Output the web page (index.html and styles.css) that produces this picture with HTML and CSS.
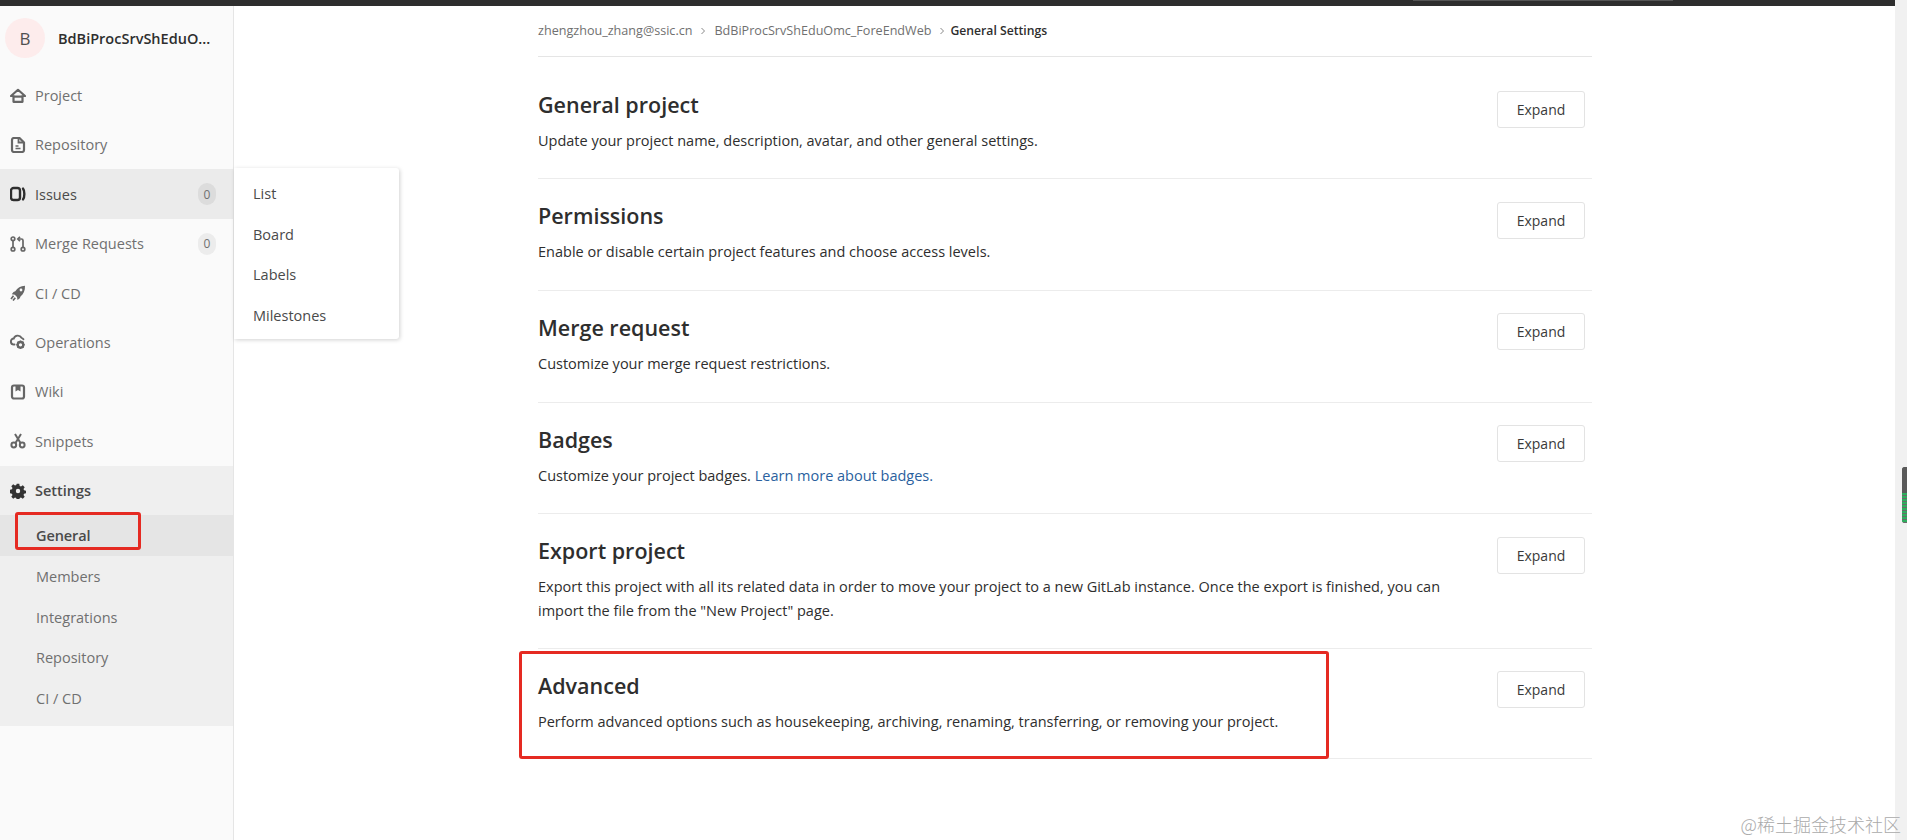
FILE: index.html
```html
<!DOCTYPE html>
<html lang="en">
<head>
<meta charset="utf-8">
<title>General Settings</title>
<link rel="stylesheet" href="styles.css">
</head>
<body>
<div class="page">
  <div class="page-main">
    <header class="topbar"><div class="topbar-field"></div></header>
    <div class="layout">
      <aside class="sidebar">
        <div class="project">
          <div class="avatar">B</div>
          <div class="project-name">BdBiProcSrvShEduO...</div>
        </div>
        <nav class="nav">
          <div class="nav-item">
            <svg class="icon" viewBox="0 0 16 16"><path d="M8 1.800 1 8h2.500v5.800h9V8H15z" fill="none" stroke="currentColor" stroke-width="2.200" stroke-linejoin="round"/><rect x="4" y="7.500" width="8" height="2.200" fill="currentColor"/></svg>
            <span>Project</span>
          </div>
          <div class="nav-item">
            <svg class="icon" viewBox="0 0 16 16"><path d="M4 1h5.500L14 5.500V13a2 2 0 0 1-2 2H4a2 2 0 0 1-2-2V3a2 2 0 0 1 2-2z" fill="none" stroke="currentColor" stroke-width="2.200" stroke-linejoin="round"/><path d="M8.500 2v3.500H13" fill="none" stroke="currentColor" stroke-width="1.800"/><path d="M5.500 9h3M5.500 11.500h5" stroke="currentColor" stroke-width="1.500"/></svg>
            <span>Repository</span>
          </div>
          <div class="nav-item nav-item-hover">
            <svg class="icon" viewBox="0 0 16 16"><rect x="1" y="2" width="9" height="12" rx="2.600" fill="none" stroke="currentColor" stroke-width="2.400"/><path d="M13 2.600c1.800 2 1.800 8.800 0 10.800" fill="none" stroke="currentColor" stroke-width="2.400" stroke-linecap="round"/></svg>
            <span>Issues</span>
            <span class="badge badge-dark">0</span>
          </div>
          <div class="nav-item">
            <svg class="icon" viewBox="0 0 16 16"><g fill="none" stroke="currentColor" stroke-width="1.700"><circle cx="3" cy="2.800" r="1.800"/><circle cx="3" cy="13.200" r="1.800"/><circle cx="13" cy="13.200" r="1.800"/><path d="M3 4.800v6.500M13 11.300V4.500A1.500 1.500 0 0 0 11.500 3H8"/><path d="M10 .8 7.800 3 10 5.200"/></g></svg>
            <span>Merge Requests</span>
            <span class="badge">0</span>
          </div>
          <div class="nav-item">
            <svg class="icon" viewBox="0 0 16 16"><path d="M15 .8C10.500 1 7.500 2.800 5.300 6.300L3.500 7 1.800 9.300 4.800 9.800 7 12 7.500 15l2.300-1.800.7-1.800C13.500 9 15.200 5.800 15 .8z" fill="currentColor"/><circle cx="11" cy="5" r="1.400" fill="#fafafa"/><path d="M3.500 10.800 1 14M5.300 12.800 3 15.500" stroke="currentColor" stroke-width="1.700"/></svg>
            <span>CI / CD</span>
          </div>
          <div class="nav-item">
            <svg class="icon" viewBox="0 0 16 16"><path d="M4.500 10.500H4A3 3 0 0 1 3.800 4.500 4.200 4.200 0 0 1 11.500 3.800c.8.200 1.500.7 1.900 1.400" fill="none" stroke="currentColor" stroke-width="1.900" stroke-linecap="round"/><circle cx="10.500" cy="10.800" r="2.800" fill="none" stroke="currentColor" stroke-width="2.300"/><path d="M10.500 6.500v1.500M10.500 13.500v1.500M6.300 10.800h1.500M13.200 10.800h1.500M7.500 7.800l1 1M12.500 12.800l1 1M13.500 7.800l-1 1M8.500 12.800l-1 1" stroke="currentColor" stroke-width="1.500"/></svg>
            <span>Operations</span>
          </div>
          <div class="nav-item">
            <svg class="icon" viewBox="0 0 16 16"><rect x="2" y="1.500" width="12" height="13" rx="2" fill="none" stroke="currentColor" stroke-width="2.200"/><path d="M5.500 1.500h5v6L8 6 5.500 7.500z" fill="currentColor"/></svg>
            <span>Wiki</span>
          </div>
          <div class="nav-item">
            <svg class="icon" viewBox="0 0 16 16"><g fill="none" stroke="currentColor" stroke-width="2"><circle cx="3.800" cy="12" r="2.400"/><circle cx="12.200" cy="12" r="2.400"/><path d="M5.500 10 11 1M10.500 10 5 1"/></g></svg>
            <span>Snippets</span>
          </div>
        </nav>
        <section class="nav-group">
          <div class="nav-item nav-item-strong">
            <svg class="icon" viewBox="0 0 16 16"><path d="M6.700.8h2.600l.4 2.100 1.300.6 1.800-1.200 1.900 1.900-1.200 1.800.6 1.300 2.100.4v2.600l-2.100.4-.6 1.300 1.200 1.800-1.900 1.900-1.800-1.200-1.300.6-.4 2.100H6.700l-.4-2.100-1.300-.6-1.800 1.200-1.900-1.900 1.200-1.800-.6-1.300-2.100-.4V6.700l2.100-.4.600-1.300-1.200-1.800 1.900-1.900 1.800 1.200 1.300-.6zM8 5.800a2.200 2.200 0 1 0 0 4.400 2.200 2.200 0 0 0 0-4.400z" fill="currentColor" fill-rule="evenodd"/></svg>
            <span>Settings</span>
          </div>
          <div class="sub-item sub-item-active">General<div class="mark mark-general"></div></div>
          <div class="sub-item">Members</div>
          <div class="sub-item">Integrations</div>
          <div class="sub-item">Repository</div>
          <div class="sub-item">CI / CD</div>
        </section>
      </aside>
      <div class="flyout">
        <div class="flyout-item">List</div>
        <div class="flyout-item">Board</div>
        <div class="flyout-item">Labels</div>
        <div class="flyout-item">Milestones</div>
      </div>
      <main class="content">
        <div class="breadcrumbs">
          <span>zhengzhou_zhang@ssic.cn</span>
          <svg class="chevron" viewBox="0 0 8 8"><path d="M2.500 1 5.500 4 2.500 7" fill="none" stroke="currentColor"/></svg>
          <span>BdBiProcSrvShEduOmc_ForeEndWeb</span>
          <svg class="chevron chevron-tight" viewBox="0 0 8 8"><path d="M2.500 1 5.500 4 2.500 7" fill="none" stroke="currentColor"/></svg>
          <strong class="crumb-current">General Settings</strong>
        </div>
        <section class="panel panel-first">
          <div class="panel-text">
            <h2 class="panel-title">General project</h2>
            <p class="panel-desc">Update your project name, description, avatar, and other general settings.</p>
          </div>
          <button class="btn">Expand</button>
        </section>
        <section class="panel">
          <div class="panel-text">
            <h2 class="panel-title">Permissions</h2>
            <p class="panel-desc">Enable or disable certain project features and choose access levels.</p>
          </div>
          <button class="btn">Expand</button>
        </section>
        <section class="panel">
          <div class="panel-text">
            <h2 class="panel-title">Merge request</h2>
            <p class="panel-desc">Customize your merge request restrictions.</p>
          </div>
          <button class="btn">Expand</button>
        </section>
        <section class="panel">
          <div class="panel-text">
            <h2 class="panel-title">Badges</h2>
            <p class="panel-desc">Customize your project badges. <a class="link" href="#">Learn more about badges.</a></p>
          </div>
          <button class="btn">Expand</button>
        </section>
        <section class="panel panel-tall">
          <div class="panel-text">
            <h2 class="panel-title">Export project</h2>
            <p class="panel-desc">Export this project with all its related data in order to move your project to a new GitLab instance. Once the export is finished, you can import the file from the "New Project" page.</p>
          </div>
          <button class="btn">Expand</button>
        </section>
        <section class="panel panel-marked">
          <div class="panel-text">
            <h2 class="panel-title">Advanced</h2>
            <p class="panel-desc">Perform advanced options such as housekeeping, archiving, renaming, transferring, or removing your project.</p>
          </div>
          <button class="btn">Expand</button>
          <div class="mark mark-advanced"></div>
        </section>
      </main>
    </div>
  </div>
  <div class="scrollbar"><div class="scroll-widget"><div class="scroll-widget-top"></div><div class="scroll-widget-bottom"></div></div></div>
  <div class="watermark">@稀土掘金技术社区</div>
</div>
</body>
</html>
```

FILE: styles.css
```css
* { box-sizing: border-box; }
html, body { margin: 0; height: 100%; overflow: hidden; background: #fff; }
body { font-family: "Open Sans", "Noto Sans", sans-serif; font-size: 14.5px; color: #2e2e2e; }

.page { display: flex; height: 840px; position: relative; }
.page-main { flex: 1; display: flex; flex-direction: column; min-width: 0; }

.topbar { height: 6px; background: #2e2e2e; flex: none; padding-left: 1413px; }
.topbar-field { width: 260px; height: 1px; background: #555; }

.layout { flex: 1; display: flex; position: relative; min-height: 0; }

.sidebar { width: 234px; flex: none; background: #fafafa; border-right: 1px solid #e5e5e5; }

.project { height: 64.6px; display: flex; align-items: center; gap: 13px; padding: 0 0 0 5px; }
.avatar { width: 40px; height: 40px; border-radius: 50%; background: #fdecec; color: #505050; display: flex; align-items: center; justify-content: center; font-size: 17px; font-weight: 500; }
.project-name { font-size: 14.5px; font-weight: 600; color: #2e2e2e; white-space: nowrap; }

.nav-item { height: 49.4px; display: flex; align-items: center; padding: 0.5px 17px 0 9.5px; color: #707070; }
.nav-item-hover { background: #ebebeb; color: #4a4a4a; }
.nav-item-hover .icon { color: #2e2e2e; }
.nav-item-strong { color: #4a4a4a; font-weight: 600; }
.nav-item-strong .icon { color: #333; }

.icon { width: 16px; height: 16px; flex: none; margin-right: 9.5px; color: #666; }

.badge { margin-left: auto; width: 18px; height: 22px; border-radius: 9px; background: #ececec; color: #707070; font-size: 12px; display: flex; align-items: center; justify-content: center; }
.badge-dark { background: #dcdcdc; }

.nav-group { background: #efefef; padding-bottom: 7px; }
.sub-item { height: 40.8px; display: flex; align-items: center; padding-left: 36px; color: #707070; position: relative; }
.sub-item-active { background: #e5e5e5; color: #4a4a4a; font-weight: 600; letter-spacing: -0.1px; }

.mark { position: absolute; border: 3px solid #e52a22; border-radius: 3px; pointer-events: none; }
.mark-general { left: 15px; top: -3px; width: 126px; height: 38px; }

.flyout { position: absolute; left: 234px; top: 162px; width: 165px; height: 171px; background: #fff; border-radius: 0 3px 3px 0; box-shadow: 1px 1px 4px rgba(0,0,0,.18); display: flex; flex-direction: column; padding-top: 5px; }
.flyout-item { height: 40.8px; display: flex; align-items: center; padding-left: 19px; color: #4a4a4a; }

.content { flex: 1; min-width: 0; padding-left: 304px; }
.content > * { width: 1054px; }

.breadcrumbs { height: 51px; display: flex; align-items: center; border-bottom: 1px solid #e5e5e5; font-size: 12.6px; color: #707070; padding-bottom: 1px; }
.chevron { width: 8px; height: 8px; margin: 0 7px; flex: none; color: #888; }
.chevron-tight { margin-right: 4px; }
.crumb-current { color: #2e2e2e; font-weight: 600; font-size: 12.2px; }

.panel { height: 111.8px; position: relative; display: flex; justify-content: space-between; align-items: flex-start; padding: 23px 7px 0 0; border-bottom: 1px solid #ececec; }
.panel-first { height: 122px; padding-top: 34px; }
.panel-tall { height: 134.5px; }
.panel-marked { height: 110.5px; }
.panel-text { width: 930px; }
.panel-title { margin: 0; font-size: 21.5px; line-height: 28px; font-weight: 600; color: #2e2e2e; }
.panel-desc { margin: 10px 0 0; line-height: 24px; color: #2e2e2e; }
.link { color: #2a5f9e; text-decoration: none; }

.btn { width: 88px; height: 37px; flex: none; margin-top: -0.5px; background: #fff; border: 1px solid #e3e3e3; border-radius: 3px; color: #3a3a3a; font: inherit; font-size: 14px; padding: 0; }

.mark-advanced { left: -19px; top: 2px; width: 810px; height: 108px; }

.scrollbar { width: 12px; flex: none; background: #f1f1f1; padding-top: 467px; display: flex; justify-content: flex-end; }
.scroll-widget { width: 5px; height: 56px; border-radius: 3px 0 0 3px; overflow: hidden; background: #555; display: flex; flex-direction: column; }
.scroll-widget-top { height: 26px; background: #5a5a5a; }
.scroll-widget-bottom { flex: 1; background: repeating-linear-gradient(#2fae5e 0 2px, #6a6a6a 2px 3px); }

.watermark { position: absolute; right: 6px; bottom: 4px; font-family: "Noto Sans CJK SC", "Noto Sans", sans-serif; font-weight: 300; font-size: 18px; line-height: 24px; color: #aaa; }
```
